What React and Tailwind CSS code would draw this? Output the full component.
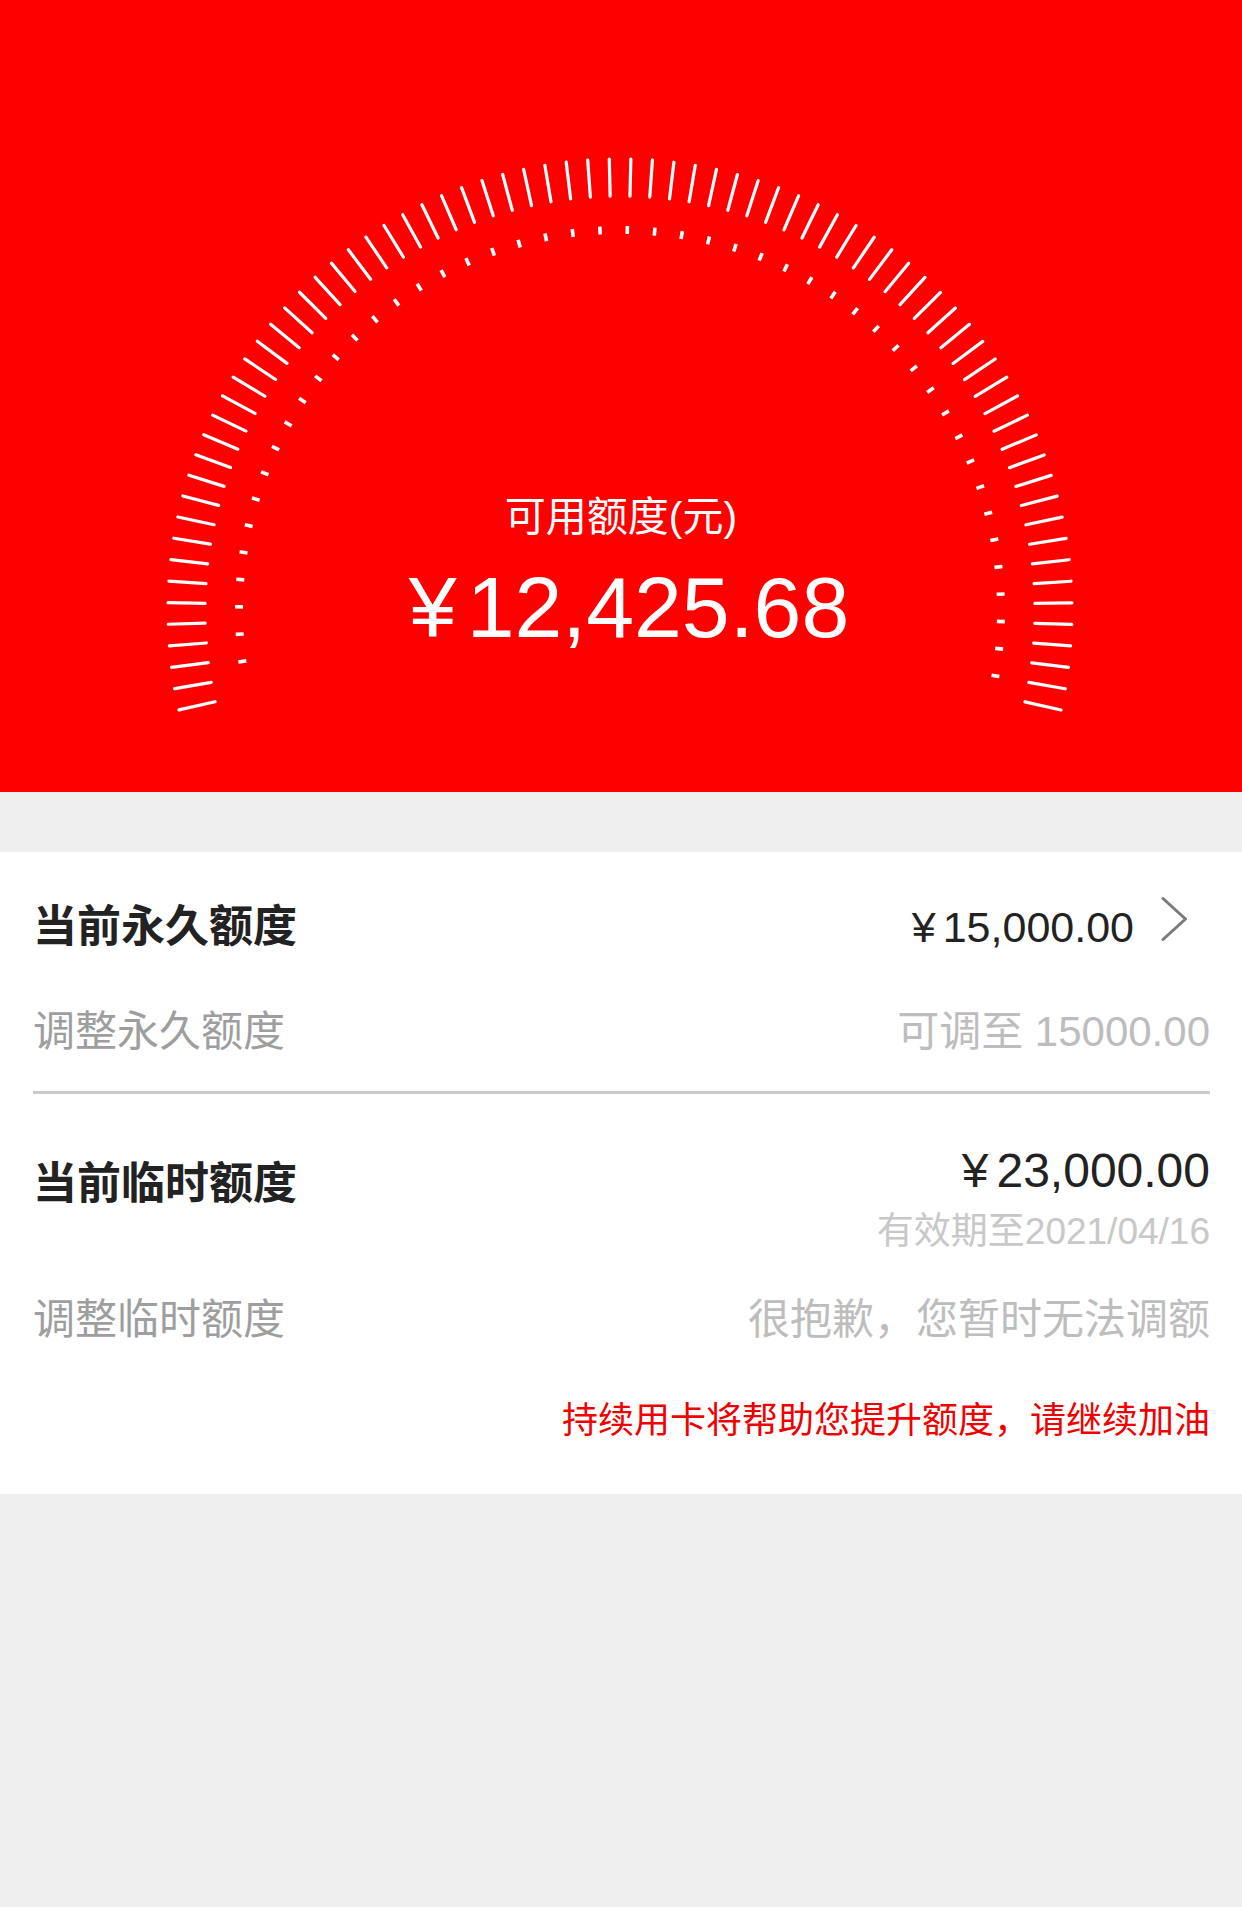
import React from 'react';

const CX = 620;
const CY = 611;

function polar(r, deg) {
    const a = (deg * Math.PI) / 180;
    return [CX + r * Math.sin(a), CY - r * Math.cos(a)];
}

// outer ticks: 76 evenly across 208deg, inner dots: 49
const ticks = Array.from({ length: 76 }, (_, i) => -102.63 + i * 2.737);
const dots = Array.from({ length: 49 }, (_, i) => -97.6 + i * 4.1125);

function Gauge() {
    return (
        <svg
            className="absolute inset-0"
            width="1242"
            height="792"
            viewBox="0 0 1242 792"
        >
            {ticks.map((deg, i) => {
                const [x1, y1] = polar(415, deg);
                const [x2, y2] = polar(452, deg);
                return (
                    <line
                        key={'t' + i}
                        x1={x1}
                        y1={y1}
                        x2={x2}
                        y2={y2}
                        stroke="#fff"
                        strokeWidth="3.2"
                        strokeLinecap="round"
                    />
                );
            })}
            {dots.map((deg, i) => {
                const [x1, y1] = polar(377, deg);
                const [x2, y2] = polar(385, deg);
                return (
                    <line
                        key={'d' + i}
                        x1={x1}
                        y1={y1}
                        x2={x2}
                        y2={y2}
                        stroke="#fff"
                        strokeWidth="3.6"
                    />
                );
            })}
        </svg>
    );
}

function Chevron() {
    return (
        <svg width="26" height="46" viewBox="0 0 26 46" className="ml-[27px] mr-[23px] -mt-[16px]">
            <path
                d="M2 2.5 L24.5 23 L2 43.5"
                fill="none"
                stroke="#7a7a7a"
                strokeWidth="3"
                strokeLinecap="round"
                strokeLinejoin="round"
            />
        </svg>
    );
}

export default function App() {
    return (
        <div className="min-h-screen w-full bg-[#efefef] font-['Liberation_Sans','Noto_Sans_CJK_SC',sans-serif]">
            <div className="relative h-[792px] bg-[#fe0000] overflow-hidden">
                <Gauge />
                <div className="relative flex flex-col items-center pt-[493px] text-white">
                    <div className="text-[41px] leading-[48px]">可用额度(元)</div>
                    <div className="mt-[23px] ml-[16px] flex items-start text-[86px] leading-[86px]">
                        <span className="mr-[10px]">¥</span>
                        <span>12,425.68</span>
                    </div>
                </div>
            </div>

            <div className="h-[60px]" />

            <div className="bg-white px-[33px] pr-[32px]">
                <div className="flex h-[150px] items-center justify-between">
                    <div className="text-[44px] font-bold leading-none text-[#222]">当前永久额度</div>
                    <div className="flex items-center">
                        <span className="text-[43px] leading-none text-[#222]">
                            <span className="mr-[7px]">¥</span>15,000.00
                        </span>
                        <Chevron />
                    </div>
                </div>

                <div className="flex h-[60px] items-center justify-between">
                    <div className="text-[42px] leading-none text-[#9e9e9e]">调整永久额度</div>
                    <div className="text-[42px] leading-none text-[#bdbdbd]">可调至 15000.00</div>
                </div>

                <div className="mt-[29px] h-[3px] bg-[#cbcbcb]" />

                <div className="flex h-[180px] justify-between">
                    <div className="self-center text-[44px] font-bold leading-none text-[#222]">当前临时额度</div>
                    <div className="flex flex-col items-end pt-[49px]">
                        <div className="text-[48px] leading-[56px] text-[#222]">
                            <span className="mr-[8px]">¥</span>23,000.00
                        </div>
                        <div className="mt-[11px] text-[37px] leading-[44px] text-[#c8c8c8]">有效期至2021/04/16</div>
                    </div>
                </div>

                <div className="flex h-[92px] items-center justify-between">
                    <div className="text-[42px] leading-none text-[#9e9e9e]">调整临时额度</div>
                    <div className="text-[42px] leading-none text-[#bdbdbd]">很抱歉，您暂时无法调额</div>
                </div>

                <div className="flex h-[128px] justify-end pt-[37px]">
                    <div className="text-[36px] leading-[36px] text-[#f00000]">持续用卡将帮助您提升额度，请继续加油</div>
                </div>
            </div>
        </div>
    );
}
